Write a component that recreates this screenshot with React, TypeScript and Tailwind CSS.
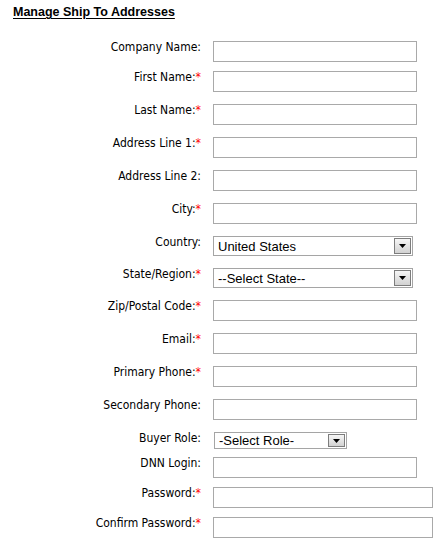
import React from "react";

type Field = {
  label: string;
  required?: boolean;
  kind: "text" | "select";
  rowClass: string;
  boxClass?: string;
  value?: string;
};

const fields: Field[] = [
  { label: "Company Name:", kind: "text", rowClass: "h-[30px]" },
  { label: "First Name:", required: true, kind: "text", rowClass: "h-[33px]" },
  { label: "Last Name:", required: true, kind: "text", rowClass: "h-[33px]" },
  { label: "Address Line 1:", required: true, kind: "text", rowClass: "h-[33px]" },
  { label: "Address Line 2:", kind: "text", rowClass: "h-[33px]" },
  { label: "City:", required: true, kind: "text", rowClass: "h-[33px]" },
  {
    label: "Country:",
    kind: "select",
    rowClass: "h-[32px]",
    boxClass: "w-[200px] h-[20px]",
    value: "United States",
  },
  {
    label: "State/Region:",
    required: true,
    kind: "select",
    rowClass: "h-[32px]",
    boxClass: "w-[200px] h-[20px]",
    value: "--Select State--",
  },
  { label: "Zip/Postal Code:", required: true, kind: "text", rowClass: "h-[33px]" },
  { label: "Email:", required: true, kind: "text", rowClass: "h-[33px]" },
  { label: "Primary Phone:", required: true, kind: "text", rowClass: "h-[33px]" },
  { label: "Secondary Phone:", kind: "text", rowClass: "h-[33px]" },
  {
    label: "Buyer Role:",
    kind: "select",
    rowClass: "h-[25px]",
    boxClass: "w-[133px] h-[17px] ml-[1px]",
    value: "-Select Role-",
  },
  { label: "DNN Login:", kind: "text", rowClass: "h-[30px]" },
  { label: "Password:", required: true, kind: "text", rowClass: "h-[30px]", boxClass: "w-[220px]" },
  { label: "Confirm Password:", required: true, kind: "text", rowClass: "h-[30px]", boxClass: "w-[220px]" },
];

function DropArrow() {
  return (
    <div className="flex h-full w-[17px] items-center justify-center border border-[#7d7d7d] bg-gradient-to-b from-[#f6f6f6] to-[#d2d2d2]">
      <svg width="7" height="4" viewBox="0 0 7 4">
        <path d="M0 0H7L3.5 4Z" fill="#000" />
      </svg>
    </div>
  );
}

function SelectBox({ value, className }: { value?: string; className?: string }) {
  return (
    <div
      className={`flex items-stretch border border-[#a5a5a5] bg-white p-px ${className ?? ""}`}
    >
      <div className="flex flex-1 items-center pl-[3px] text-[13px] leading-none text-black [font-family:'Liberation_Sans',Arial,sans-serif]">
        {value}
      </div>
      <DropArrow />
    </div>
  );
}

export default function App() {
  return (
    <div className="min-h-[551px] w-[444px] bg-white pt-[4px] text-black [font-family:'DejaVu_Sans_Condensed','Liberation_Sans',Arial,sans-serif]">
      <h2 className="pl-[13px] text-[12.5px] leading-[16px] font-bold underline underline-offset-2 [font-family:'Liberation_Sans',Arial,sans-serif]">
        Manage Ship To Addresses
      </h2>
      <div className="mt-[20px] flex flex-col">
        {fields.map((f) => (
          <div key={f.label} className={`flex items-start ${f.rowClass}`}>
            <div className="w-[201px] text-right text-[12px] leading-[15px]">
              {f.label}
              {f.required && <span className="text-[#ff0000]">*</span>}
            </div>
            <div className="ml-[12px] pt-px">
              {f.kind === "text" ? (
                <input
                  type="text"
                  className={`block h-[21px] border border-[#a9a9a9] bg-white ${f.boxClass ?? "w-[204px]"}`}
                />
              ) : (
                <SelectBox value={f.value} className={f.boxClass} />
              )}
            </div>
          </div>
        ))}
      </div>
    </div>
  );
}
